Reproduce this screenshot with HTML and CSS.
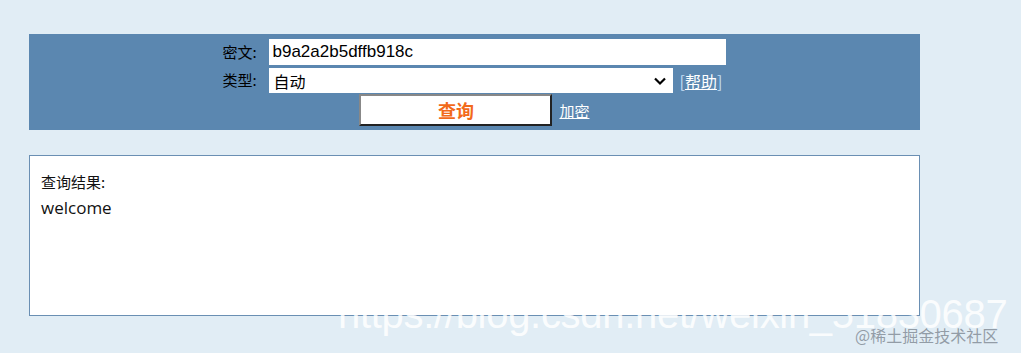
FILE: index.html
```html
<!DOCTYPE html>
<html lang="zh-CN">
<head>
    <meta charset="UTF-8">
    <title>查询</title>
    <link rel="stylesheet" href="styles.css">
</head>
<body>
    <div class="query-box">
        <form action="#" method="post">
            <div class="row">
                <label for="cipher">密文:</label>
                <input type="text" id="cipher" class="cipher" value="b9a2a2b5dffb918c">
            </div>
            <div class="row">
                <label for="type">类型:</label>
                <div class="select-wrap">
                    <select id="type" class="type">
                        <option>自动</option>
                    </select>
                    <svg class="chevron" width="14" height="10" viewBox="0 0 14 10"><path d="M2 2.5 L7 7.5 L12 2.5" fill="none" stroke="#000" stroke-width="2.2"/></svg>
                </div>
                <span class="help">[<a href="#">帮助</a>]</span>
            </div>
            <div class="row">
                <button type="submit" class="submit">查询</button>
                <a href="#" class="encrypt">加密</a>
            </div>
        </form>
    </div>

    <div class="result">
        <div class="result-label">查询结果:</div>
        <div class="result-text">welcome</div>
    </div>

    <div class="watermark">https://blog.csdn.net/weixin_51830687</div>
    <div class="watermark-site">@稀土掘金技术社区</div>
</body>
</html>
```

FILE: styles.css
```css
body {
    font-family: "Noto Sans CJK SC", "Liberation Sans", sans-serif;
    margin: 0;
    padding: 34px 101px 0 29px;
    background-color: #e1edf5;
    height: 353px;
    box-sizing: border-box;
    overflow: hidden;
    position: relative;
}

.query-box {
    background: #5b87b0;
    height: 96px;
    box-sizing: border-box;
    padding-top: 4px;
}

.query-box form {
    display: flex;
    flex-direction: column;
    align-items: center;
}

.row {
    display: flex;
    align-items: center;
    width: 504px;
}

.row label {
    width: 41px;
    font-size: 15px;
    color: #000;
    margin-right: 4px;
    line-height: 20px;
    white-space: nowrap;
}

.cipher {
    width: 459px;
    height: 28px;
    box-sizing: border-box;
    border: 1px solid #5b87b0;
    padding: 0 4px;
    font-family: "Liberation Sans", sans-serif;
    font-size: 17px;
    outline: none;
}

.select-wrap {
    position: relative;
    margin-left: 1px;
    margin-top: 2px;
}

.type {
    width: 404px;
    height: 25px;
    border: 0;
    padding: 0 5px;
    font-family: "Noto Sans CJK SC", sans-serif;
    font-size: 16px;
    background: #fff;
    appearance: none;
    display: block;
    color: #000;
}

.chevron {
    position: absolute;
    right: 6px;
    top: 8px;
}

.help {
    margin-left: 7px;
    color: #c5dff5;
    font-size: 16px;
    margin-top: 2px;
}

.help a {
    color: #fff;
}

.row:last-child {
    justify-content: center;
    margin-top: 1px;
}

.submit {
    width: 193px;
    height: 32px;
    background: #fff;
    border: 2px solid #222;
    border-top-color: #888;
    border-left-color: #888;
    color: #f26a1b;
    font-family: "Noto Sans CJK SC", sans-serif;
    font-weight: bold;
    font-size: 18px;
    padding: 0;
}

.encrypt {
    color: #fff;
    font-size: 15px;
    margin-left: 7px;
}

.result {
    margin-top: 25px;
    height: 161px;
    box-sizing: border-box;
    background: #fff;
    border: 1px solid #6a8fb3;
    padding: 15px 11px;
}

.result-label {
    font-size: 15px;
    line-height: 22px;
    color: #111;
}

.result-text {
    font-family: "Open Sans", "Liberation Sans", sans-serif;
    font-size: 17px;
    line-height: 30px;
    color: #111;
}

.watermark {
    position: absolute;
    left: 338px;
    top: 292px;
    font-family: "Liberation Sans", sans-serif;
    font-size: 40px;
    color: rgba(255, 255, 255, 0.85);
    white-space: nowrap;
    letter-spacing: -0.3px;
}

.watermark-site {
    position: absolute;
    left: 855px;
    top: 323px;
    font-family: "Noto Sans CJK SC", serif;
    font-size: 16px;
    color: rgba(120, 130, 140, 0.75);
    white-space: nowrap;
}
```
